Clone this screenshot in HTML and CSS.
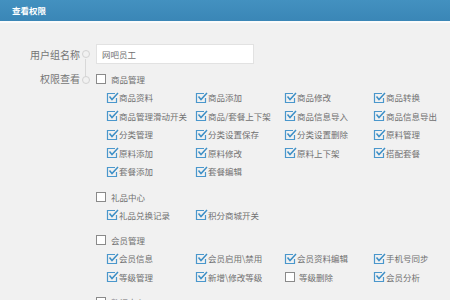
FILE: index.html
```html
<!DOCTYPE html>
<html lang="zh-CN">
<head>
    <meta charset="UTF-8">
    <title>查看权限</title>
    <link rel="stylesheet" href="styles.css">
</head>
<body>

    <div class="title-bar">查看权限</div>

    <div class="form">
        <div class="row">
            <div class="row-label">用户组名称</div>
            <div class="dot"></div>
            <input class="text-input" type="text" value="网吧员工">
        </div>

        <div class="row row-perms">
            <div class="row-label">权限查看</div>
            <div class="dot"></div>
            <div class="perms">

                <div class="group">
                    <div class="parent"><span class="box"></span>商品管理</div>
                    <div class="items">
                        <div class="item on">商品资料</div>
                        <div class="item on">商品添加</div>
                        <div class="item on">商品修改</div>
                        <div class="item on">商品转换</div>
                        <div class="item on">商品管理滑动开关</div>
                        <div class="item on">商品/套餐上下架</div>
                        <div class="item on">商品信息导入</div>
                        <div class="item on">商品信息导出</div>
                        <div class="item on">分类管理</div>
                        <div class="item on">分类设置保存</div>
                        <div class="item on">分类设置删除</div>
                        <div class="item on">原料管理</div>
                        <div class="item on">原料添加</div>
                        <div class="item on">原料修改</div>
                        <div class="item on">原料上下架</div>
                        <div class="item on">搭配套餐</div>
                        <div class="item on">套餐添加</div>
                        <div class="item on">套餐编辑</div>
                    </div>
                </div>

                <div class="group">
                    <div class="parent"><span class="box"></span>礼品中心</div>
                    <div class="items">
                        <div class="item on">礼品兑换记录</div>
                        <div class="item on">积分商城开关</div>
                    </div>
                </div>

                <div class="group">
                    <div class="parent"><span class="box"></span>会员管理</div>
                    <div class="items">
                        <div class="item on">会员信息</div>
                        <div class="item on">会员启用\禁用</div>
                        <div class="item on">会员资料编辑</div>
                        <div class="item on">手机号同步</div>
                        <div class="item on">等级管理</div>
                        <div class="item on">新增\修改等级</div>
                        <div class="item">等级删除</div>
                        <div class="item on">会员分析</div>
                    </div>
                </div>

                <div class="group">
                    <div class="parent"><span class="box"></span>数据中心</div>
                </div>

            </div>
        </div>
    </div>

</body>
</html>
```

FILE: styles.css
```css
body {
    margin: 0;
    font-family: "Noto Sans CJK SC", "Liberation Sans", sans-serif;
    font-size: 8.5px;
    color: #707070;
    background-color: #f1f1f1;
    overflow: hidden;
}

.title-bar {
    height: 21px;
    line-height: 20px;
    padding-left: 12px;
    color: white;
    font-weight: bold;
    font-size: 8.5px;
    background: linear-gradient(#4391c0, #3a86b6);
    border-bottom: 2px solid #fbfbfb;
}

.form {
    padding-top: 21px;
}

.row {
    display: flex;
    align-items: center;
    position: relative;
}

.row-label {
    width: 80px;
    flex-shrink: 0;
    text-align: right;
    font-size: 10px;
    color: #757575;
}

.dot {
    width: 6px;
    height: 6px;
    flex-shrink: 0;
    border: 1px solid #d2d2d2;
    border-radius: 50%;
    background: #f1f1f1;
    margin: 0 6px 0 2px;
    position: relative;
    z-index: 1;
}

.row:first-child::after {
    content: "";
    position: absolute;
    left: 85px;
    top: 15px;
    height: 22px;
    border-left: 1px solid #d8d8d8;
}

.text-input {
    width: 158px;
    height: 20px;
    flex-shrink: 0;
    box-sizing: border-box;
    border: 1px solid #e2e2e2;
    background: white;
    padding: 0 5px;
    font-family: inherit;
    font-size: 8.5px;
    color: #707070;
    outline: none;
}

.row-perms {
    align-items: flex-start;
    margin-top: 6px;
}

.row-perms .row-label {
    margin-top: 2px;
    line-height: 14px;
}

.row-perms .dot {
    margin-top: 6px;
}

.perms {
    flex: none;
}

.group {
    margin-bottom: 7px;
}

.parent {
    height: 18px;
    display: flex;
    align-items: center;
}

.box {
    width: 8px;
    height: 8px;
    border: 1px solid #8a8a8a;
    background: white;
    margin-right: 5px;
}

.items {
    display: grid;
    grid-template-columns: repeat(4, 89px);
    padding-left: 10px;
}

.item {
    height: 18.5px;
    display: flex;
    align-items: center;
    white-space: nowrap;
}

.item::before {
    content: "";
    width: 8px;
    height: 8px;
    border: 1px solid #8a8a8a;
    background: white;
    margin: 0 4px 0 1px;
    flex-shrink: 0;
}

.item.on::before {
    width: 13px;
    height: 11px;
    border: none;
    background: url("data:image/svg+xml;utf8,<svg xmlns='http://www.w3.org/2000/svg' width='13' height='11' viewBox='0 0 13 11'><path d='M9 1.5H1.5V10.5H10.5V6' fill='none' stroke='%234a97cc' stroke-width='1.2'/><path d='M3.5 4.5L6 7.5L12 1' fill='none' stroke='%233d8fc6' stroke-width='1.5'/></svg>") no-repeat;
    margin: 0;
}
```
